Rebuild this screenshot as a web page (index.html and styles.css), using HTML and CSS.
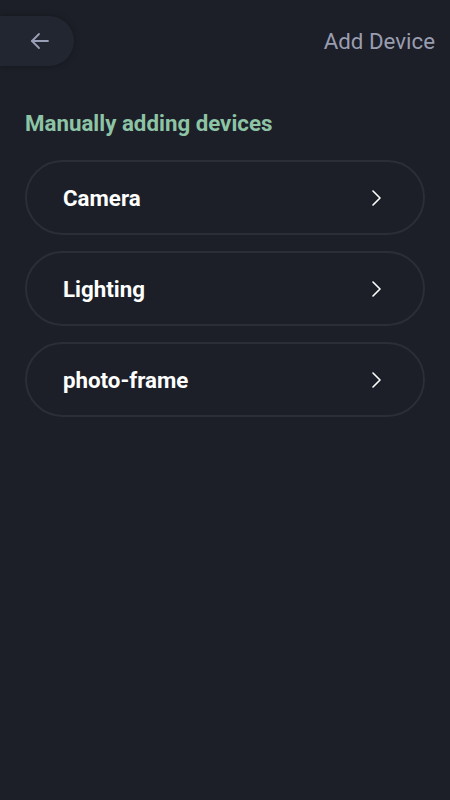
FILE: index.html
```html
<!DOCTYPE html>
<html>
<head>
<meta charset="utf-8">
<link rel="stylesheet" href="styles.css">
</head>
<body>
<div class="app">
  <header class="topbar">
    <div class="back">
      <svg width="24" height="24" viewBox="0 0 24 24" fill="none" stroke="#9a9fb8" stroke-width="1.8" stroke-linecap="round" stroke-linejoin="round"><path d="M20 12H4"/><path d="M11 5l-7 7 7 7"/></svg>
    </div>
    <div class="title">Add Device</div>
  </header>
  <main class="content">
    <h2 class="section">Manually adding devices</h2>
    <div class="list">
      <div class="item"><span class="label">Camera</span>
        <svg class="chev" width="12" height="16" viewBox="0 0 12 16" fill="none" stroke="#ffffff" stroke-width="1.6" stroke-linecap="round" stroke-linejoin="round"><path d="M2 1l7 7-7 7"/></svg></div>
      <div class="item"><span class="label">Lighting</span>
        <svg class="chev" width="12" height="16" viewBox="0 0 12 16" fill="none" stroke="#ffffff" stroke-width="1.6" stroke-linecap="round" stroke-linejoin="round"><path d="M2 1l7 7-7 7"/></svg></div>
      <div class="item"><span class="label">photo-frame</span>
        <svg class="chev" width="12" height="16" viewBox="0 0 12 16" fill="none" stroke="#ffffff" stroke-width="1.6" stroke-linecap="round" stroke-linejoin="round"><path d="M2 1l7 7-7 7"/></svg></div>
    </div>
  </main>
</div>
</body>
</html>
```
FILE: styles.css
```css
* { box-sizing: border-box; }
html, body { margin: 0; padding: 0; }
body {
  background: #1c1f27;
  font-family: Roboto, "Liberation Sans", sans-serif;
  width: 450px;
  height: 800px;
  overflow: hidden;
}
.topbar {
  display: flex;
  align-items: center;
  justify-content: space-between;
  padding: 16px 15px 0 0;
}
.back {
  width: 74px;
  height: 50px;
  background: #222631;
  border-radius: 0 25px 25px 0;
  display: flex;
  align-items: center;
  padding-left: 28px;
  box-shadow: 0 0 6px rgba(0,0,0,0.25);
}
.title {
  color: #9a9db0;
  font-size: 22.3px;
  font-weight: 400;
}
.content {
  padding: 0 25px;
}
.section {
  margin: 44px 0 24px;
  color: #8ec4a6;
  font-size: 22.3px;
  font-weight: 700;
  line-height: 26px;
}
.list {
  display: flex;
  flex-direction: column;
  gap: 16px;
}
.item {
  height: 75px;
  border: 2px solid #2b2e36;
  border-radius: 38px;
  display: flex;
  align-items: center;
  justify-content: space-between;
  padding: 0 40px 0 36px;
}
.label {
  color: #ffffff;
  font-size: 22.3px;
  font-weight: 700;
}
.chev { display: block; }
```
